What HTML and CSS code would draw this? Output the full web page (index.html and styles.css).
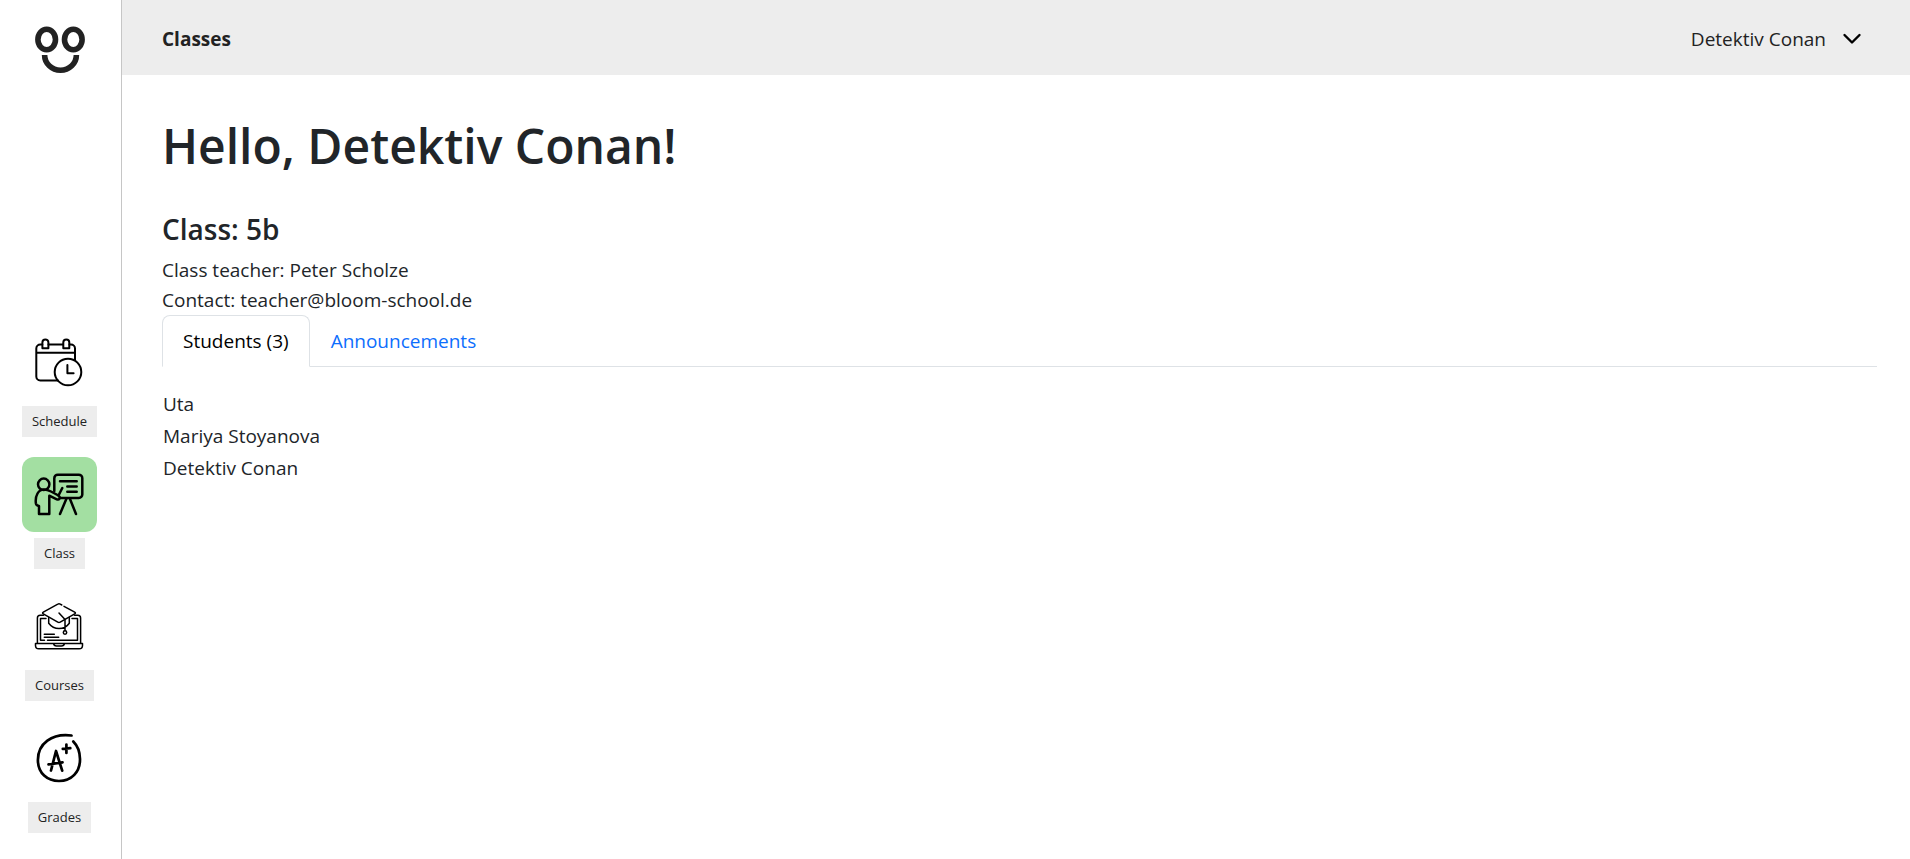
FILE: index.html
```html
<!DOCTYPE html>
<html lang="en">
<head>
<meta charset="utf-8">
<title>Classes</title>
<link rel="stylesheet" href="styles.css">
</head>
<body>
<div class="app">
  <aside class="sidebar">
    <a class="logo" href="#" aria-label="Home">
      <svg width="52" height="48" viewBox="0 0 52 48" fill="none" stroke="#222" stroke-width="5.6">
        <ellipse cx="12.700" cy="13.500" rx="8.800" ry="10.300"/>
        <ellipse cx="39.300" cy="13.500" rx="8.800" ry="10.300"/>
        <path d="M10.600 29a15.900 15.200 0 0 0 31.800 0"/>
      </svg>
    </a>
    <nav class="menu">
      <a class="item" href="#">
        <span class="tile">
          <svg viewBox="0 0 75 75" stroke-width="2">
            <path d="M36 55.400H18.300a4 4 0 0 1-4-4V23.500a4 4 0 0 1 4-4h2M26.500 19.500H41M47.500 19.500h1.500a4 4 0 0 1 4 4V35M14.300 27.700H53"/>
            <path d="M20.400 23.200v-5.800a3 3 0 0 1 6 0v5.800zM41.300 23.200v-5.800a3 3 0 0 1 6 0v5.800z"/>
            <circle cx="46" cy="47" r="13.300"/>
            <path d="M45.400 40v8.200h6.200"/>
          </svg>
        </span>
        <span class="label">Schedule</span>
      </a>
      <a class="item" href="#" aria-current="page">
        <span class="tile tile-active">
          <svg viewBox="0 0 75 75" stroke-width="2.500">
            <circle cx="21.700" cy="27.300" r="5.700"/>
            <path d="M32.300 34V21.200a3.500 3.500 0 0 1 3.500-3.500h21a3.500 3.500 0 0 1 3.500 3.500v16.300a3.500 3.500 0 0 1-3.500 3.500H38"/>
            <path d="M38 24.300h16.700M45.300 29.500h9.400M45.300 34.700h9.400M44.300 42 38 57M48 42l6 15"/>
            <path d="M35.500 38 29 34.500c-6-3-11-2.500-13.500 2-2 3.500-2 7-1.600 10 .3 1.700 1.500 2.200 3.100 2.500v8h10.300V38.700l7.500 3.600c2.500 1 4-1.800 2-3.400zM36.500 38.500l3.800-7.500"/>
          </svg>
        </span>
        <span class="label">Class</span>
      </a>
      <a class="item" href="#">
        <span class="tile">
          <svg viewBox="0 6 75 75" stroke-width="1.500">
            <path d="m42 23.300 10.700 5.800q1.500.9 0 1.800L38.200 39.200q-1.200.7-2.400 0L21.300 30.900q-1.500-.9 0-1.800l14.500-8q1.200-.7 2.400 0l1.600.9"/>
            <path d="M26.700 34.500v5.800c3 4 6.500 5.300 10.300 5.300s7.500-1.300 10.300-5.300v-5.800M37 30l6 6.500v11"/>
            <circle cx="43" cy="49.500" r="1.700"/>
            <path d="M15.400 60V35a2.800 2.800 0 0 1 2.800-2.800h3.300M52.500 32.200h3.300a2.800 2.800 0 0 1 2.800 2.800v25"/>
            <path d="M24 35.500h-5.500v21.800h4M25.500 57.300h30V35.500H50M22.300 51.300h10M22.300 54.200h14.400"/>
            <path d="M13.500 60.400h47v2a3.300 3.300 0 0 1-3.300 3.300H16.800a3.300 3.300 0 0 1-3.300-3.300zM31.500 60.400q.5 2.600 3 2.600h5q2.500 0 3-2.600"/>
          </svg>
        </span>
        <span class="label">Courses</span>
      </a>
      <a class="item" href="#">
        <span class="tile">
          <svg viewBox="0 4 75 75" stroke-width="2.700">
            <path d="M49.500 18.500C30 16 15.900 26.500 15.900 43c0 13.500 9.600 21 21.100 21 12.500 0 21.200-9 21-22-.1-7-2.200-13-6.700-17.500"/>
            <path d="M29 53.500 34 34l6.200 19.700M26.500 47.300l14-2M44.400 27.500V36M40.800 31.800l7.500-.6"/>
          </svg>
        </span>
        <span class="label">Grades</span>
      </a>
    </nav>
  </aside>
  <div class="page">
    <header class="topbar">
      <strong>Classes</strong>
      <button class="user" type="button">
        Detektiv Conan
        <svg width="20" height="12" viewBox="0 0 20 12" stroke-width="2.400"><path d="m2.500 2 7.500 7.500L17.500 2"/></svg>
      </button>
    </header>
    <main class="content">
      <h1>Hello, Detektiv Conan!</h1>
      <h2>Class: 5b</h2>
      <p>Class teacher: Peter Scholze</p>
      <p>Contact: teacher@bloom-school.de</p>
      <div class="tabs" role="tablist">
        <button class="tab tab-active" type="button" role="tab" aria-selected="true">Students (3)</button>
        <button class="tab" type="button" role="tab" aria-selected="false">Announcements</button>
      </div>
      <table class="students">
        <tbody>
          <tr><td>Uta</td></tr>
          <tr><td>Mariya Stoyanova</td></tr>
          <tr><td>Detektiv Conan</td></tr>
        </tbody>
      </table>
    </main>
  </div>
</div>
</body>
</html>
```
FILE: styles.css
```css
* { box-sizing: border-box; }
body {
  margin: 0;
  background: #fff;
  color: #212529;
  font-family: "Open Sans", "Noto Sans", sans-serif;
  font-size: 19px;
  line-height: 30px;
}
button { font: inherit; cursor: pointer; }
a { color: inherit; text-decoration: none; }
svg { display: block; fill: none; stroke-linecap: round; stroke-linejoin: round; }

.app { display: flex; min-height: 100vh; }

.sidebar {
  flex: none;
  width: 122px;
  padding: 26px 2px 26px 0;
  border-right: 1px solid #c6c6c6;
  display: flex;
  flex-direction: column;
  justify-content: space-between;
  align-items: center;
}
.logo svg { stroke-linecap: butt; }
.menu { display: flex; flex-direction: column; gap: 20px; }
.item { display: flex; flex-direction: column; align-items: center; gap: 6px; }
.tile { width: 75px; height: 75px; border-radius: 12px; }
.tile svg { stroke: #000; }
.tile-active { background: #a3dfa2; }
.label {
  padding: 0 10px;
  background: #ededed;
  color: #222;
  font-size: 13px;
  line-height: 31px;
}

.page { flex: 1; min-width: 0; }
.topbar {
  display: flex;
  justify-content: space-between;
  align-items: center;
  height: 75px;
  padding: 2px 48px 0 40px;
  background: #ededed;
  color: #222;
}
.user {
  display: flex;
  align-items: center;
  gap: 16px;
  padding: 0;
  border: 0;
  background: none;
  color: #222;
}
.user svg { stroke: #000; }

.content { padding: 41px 33px 40px 40px; }
h1, h2, p { margin: 0; }
h1 { font-size: 48px; line-height: 60px; font-weight: 600; }
h2 { margin: 35px 0 8px; font-size: 28px; line-height: 36px; font-weight: 600; }

.tabs { display: flex; border-bottom: 1px solid #dee2e6; }
.tab {
  margin-bottom: -1px;
  padding: 10px 20px;
  border: 1px solid transparent;
  border-radius: 8px 8px 0 0;
  background: none;
  color: #0d6efd;
}
.tab-active {
  border-color: #dee2e6 #dee2e6 #fff;
  background: #fff;
  color: #000;
}
.students { margin-top: 21px; border-collapse: collapse; }
.students td { padding: 1px; }
```
